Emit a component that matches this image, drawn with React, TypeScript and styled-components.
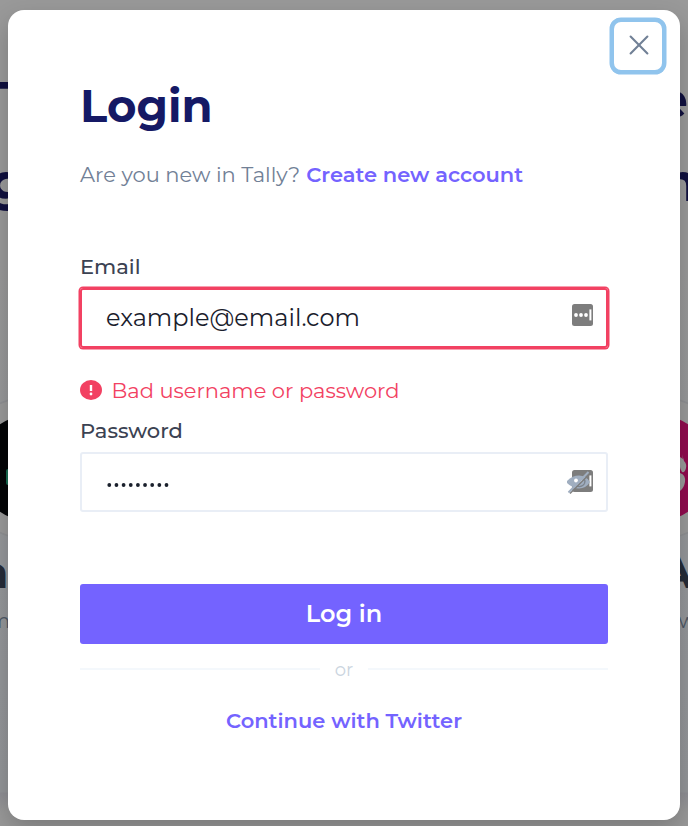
import React from 'react';
import styled, { createGlobalStyle } from 'styled-components';

const Global = createGlobalStyle`
  * { box-sizing: border-box; }
  body { margin: 0; font-family: Montserrat, Inter, sans-serif; background: #999; }
`;

const Screen = styled.div`
  display: grid;
  width: 688px;
  height: 826px;
  overflow: hidden;
`;

/* Dimmed landing page underneath the dialog */
const Landing = styled.div`
  grid-area: 1 / 1;
  min-width: 0;
  height: 826px;
  overflow: hidden;
  background: linear-gradient(#999 0, #999 260px, #95979a 560px, #939598 792px, #8f8f94 793px, #999 812px);
`;

const EdgeRow = styled.div<{ $height: number; $size: number; $color: string; $weight: number; $left: number; $right: number }>`
  display: flex;
  justify-content: space-between;
  height: ${p => p.$height}px;
  line-height: ${p => p.$height}px;
  font-size: ${p => p.$size}px;
  font-weight: ${p => p.$weight};
  color: ${p => p.$color};
  white-space: nowrap;
  margin-left: ${p => p.$left}px;
  margin-right: ${p => p.$right}px;
`;

const Spacer = styled.div<{ $height: number }>`
  height: ${p => p.$height}px;
`;

const LogoStrip = styled.svg`
  display: block;
`;

const Modal = styled.section`
  grid-area: 1 / 1;
  z-index: 1;
  position: relative;
  width: 672px;
  height: 810px;
  margin: 10px 8px 6px;
  padding: 68px 72px 0;
  border-radius: 16px;
  background: #fff;
  box-shadow: 0 10px 24px rgba(0, 0, 0, 0.2);
`;

const CloseButton = styled.button`
  position: absolute;
  top: 8px;
  right: 14px;
  display: grid;
  place-items: center;
  width: 56px;
  height: 56px;
  padding: 0 0 2px 2px;
  border: 4px solid #90c4ed;
  border-radius: 11px;
  background: #fff;
  box-shadow: 0 0 0 0.5px #90c4ed;
`;

const Title = styled.h1`
  margin: 0 0 26px;
  font-size: 45px;
  line-height: 56px;
  font-weight: 700;
  color: #151965;
`;

const Subtitle = styled.p`
  display: flex;
  gap: 6px;
  margin: 0 0 65px;
  font-size: 21px;
  line-height: 30px;
  font-weight: 400;
  color: #718096;
  white-space: nowrap;
`;

const Link = styled.a`
  font-size: 21px;
  font-weight: 600;
  color: #7463ff;
  white-space: nowrap;
`;

const Label = styled.label`
  display: block;
  height: 24px;
  margin-bottom: 9px;
  font-size: 21px;
  line-height: 24px;
  font-weight: 500;
  color: #3b4252;
`;

const Field = styled.div<{ $invalid?: boolean }>`
  display: flex;
  align-items: center;
  justify-content: space-between;
  height: 60px;
  padding: 0 12px 0 24px;
  border: 2px solid ${p => (p.$invalid ? '#f24162' : '#e9eef6')};
  border-radius: 3px;
  box-shadow: ${p => (p.$invalid ? '0 0 0 1.5px #f24162' : 'none')};
`;

const Value = styled.span`
  font-size: 24px;
  line-height: 28px;
  font-weight: 400;
  color: #1a202c;
`;

const ErrorLine = styled.p`
  display: flex;
  align-items: center;
  gap: 9.5px;
  height: 24px;
  margin: 30px 0 17px;
  font-size: 21px;
  line-height: 24px;
  font-weight: 400;
  color: #f24162;
  white-space: nowrap;
`;

const ErrorText = styled.span`
  padding-top: 2px;
`;

const Submit = styled.button`
  display: block;
  width: 100%;
  height: 60px;
  margin: 72px 0 13px;
  padding: 0 0 2px;
  border: 0;
  border-radius: 3px;
  background: #7463ff;
  color: #fff;
  font-family: inherit;
  font-size: 24px;
  font-weight: 600;
`;

const Divider = styled.div`
  display: flex;
  align-items: center;
  gap: 15px;
  height: 24px;
  font-size: 18px;
  line-height: 24px;
  font-weight: 400;
  color: #cbd5e0;

  &::before,
  &::after {
    content: '';
    flex: 1;
    height: 2px;
    background: #f4f8fc;
  }
`;

const DividerText = styled.span`
  padding-top: 2px;
`;

const Alternate = styled.div`
  margin-top: 28px;
  line-height: 24px;
  text-align: center;
`;

const ManagerKey = () => (
  <>
    <rect x="5" y="1" width="21" height="22" rx="2.5" fill="#7d7d7d" />
    <circle cx="9" cy="12" r="1.9" fill="#fff" />
    <circle cx="14" cy="12" r="1.9" fill="#fff" />
    <circle cx="19" cy="12" r="1.9" fill="#fff" />
    <rect x="22.4" y="6.4" width="2" height="11" fill="#fff" />
  </>
);

const Icon = styled.svg<{ $lift?: number }>`
  flex: none;
  margin-bottom: ${p => p.$lift ?? 0}px;
`;

export default function App() {
  return (
    <>
      <Global />
      <Screen>
        <Landing aria-hidden="true">
          <Spacer $height={61} />
          <EdgeRow $height={78} $size={51} $weight={700} $color="#10103f" $left={-23} $right={0}>
            <span>T</span>
            <span>e</span>
          </EdgeRow>
          <EdgeRow $height={86} $size={53} $weight={700} $color="#10103f" $left={-10} $right={-10}>
            <span>g</span>
            <span>n</span>
          </EdgeRow>
          <Spacer $height={160} />
          <LogoStrip width="688" height="160">
            <circle cx="30" cy="83" r="71" fill="#999" stroke="#8f9093" strokeWidth="1.5" />
            <circle cx="658" cy="83" r="71" fill="#999" stroke="#8f9093" strokeWidth="1.5" />
            <circle cx="30" cy="83" r="53" fill="#040507" />
            <rect x="6" y="84" width="5" height="16" rx="2" fill="#176a50" />
            <circle cx="658" cy="83" r="53" fill="#910a4e" />
            <path
              d="M680 72l3 2-1-5 2 7q3 3 2 7-1 5-4 4-2-3-2-5zM680 88q6 2 5 9-1 6-5 9z"
              fill="#999"
            />
          </LogoStrip>
          <EdgeRow $height={55} $size={44} $weight={700} $color="#262c38" $left={-22} $right={-5}>
            <span>n</span>
            <span>A</span>
          </EdgeRow>
          <EdgeRow $height={43} $size={20} $weight={400} $color="#4e5866" $left={-11} $right={-8}>
            <span>m</span>
            <span>w</span>
          </EdgeRow>
        </Landing>

        <Modal role="dialog" aria-label="Login">
          <CloseButton aria-label="Close">
            <svg width="20" height="20" viewBox="0 0 20 20" stroke="#718096" strokeWidth="2.1" strokeLinecap="round">
              <path d="M1.6 1.6 18.4 18.4M18.4 1.6 1.6 18.4" />
            </svg>
          </CloseButton>
          <Title>Login</Title>
          <Subtitle>
            <span>Are you new in Tally?</span>
            <Link>Create new account</Link>
          </Subtitle>

          <Label>Email</Label>
          <Field $invalid>
            <Value>example@email.com</Value>
            <Icon width="27" height="24" viewBox="0 0 27 24" $lift={6}>
              <ManagerKey />
            </Icon>
          </Field>
          <ErrorLine>
            <Icon width="22" height="20" viewBox="0 0 22 20" $lift={1}>
              <ellipse cx="11" cy="10" rx="11" ry="10" fill="#f24162" />
              <path d="M11 5v6" stroke="#fff" strokeWidth="2.4" />
              <circle cx="11" cy="14" r="1.4" fill="#fff" />
            </Icon>
            <ErrorText>Bad username or password</ErrorText>
          </ErrorLine>

          <Label>Password</Label>
          <Field>
            <Icon width="64" height="6" viewBox="0 0 64 6" role="img" aria-label="Hidden password" $lift={-6}>
              {Array.from({ length: 9 }, (_, i) => (
                <circle key={i} cx={3.3 + i * 7.15} cy="3" r="1.9" fill="#1a202c" />
              ))}
            </Icon>
            <Icon width="27" height="26" viewBox="0 0 27 26" $lift={1}>
              <ManagerKey />
              <path d="M-1 13Q5 6.500 12 6.500t11 6.500q-4 6.500-11 6.500T-1 13z" fill="#a0aec0" />
              <circle cx="9" cy="11.500" r="1.900" fill="#fff" />
              <circle cx="14" cy="11.500" r="1.300" fill="#e3e6ea" />
              <path d="M9 17q6 2 8.500-2.500 1-3-.5-5" fill="none" stroke="#7d858f" strokeWidth="1.3" />
              <path d="M3 24.500 23 4.500" stroke="#7d7d7d" strokeWidth="1.500" />
              <path d="M1.500 23.500 21.500 3" stroke="#a0aec0" strokeWidth="2" />
            </Icon>
          </Field>

          <Submit>Log in</Submit>
          <Divider>
            <DividerText>or</DividerText>
          </Divider>
          <Alternate>
            <Link>Continue with Twitter</Link>
          </Alternate>
        </Modal>
      </Screen>
    </>
  );
}
